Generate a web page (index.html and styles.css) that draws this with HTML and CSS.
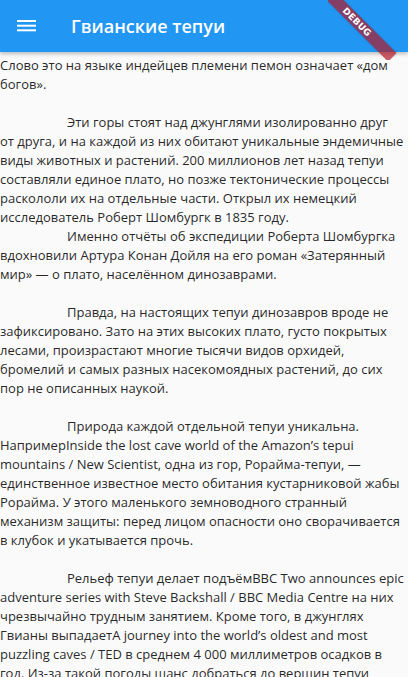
FILE: index.html
```html
<!DOCTYPE html>
<html lang="ru">
<head>
<meta charset="utf-8">
<title>Гвианские тепуи</title>
<link rel="stylesheet" href="styles.css">
</head>
<body>
<header class="appbar">
  <svg class="menu" width="20" height="12" viewBox="0 0 20 12" aria-hidden="true">
    <rect x="0" y="0" width="19" height="2" fill="#fff"/>
    <rect x="0" y="4.7" width="19" height="2" fill="#fff"/>
    <rect x="0" y="9.3" width="19" height="2" fill="#fff"/>
  </svg>
  <h1 class="title">Гвианские тепуи</h1>
</header>
<div class="banner-wrap"><div class="banner">DEBUG</div></div>
<main class="content">
  <p class="para">Слово это на языке индейцев племени пемон означает «дом<br>богов».</p>
  <p class="para indent gap">Эти горы стоят над джунглями изолированно друг<br>от друга, и на каждой из них обитают уникальные эндемичные<br>виды животных и растений. 200 миллионов лет назад тепуи<br>составляли единое плато, но позже тектонические процессы<br>раскололи их на отдельные части. Открыл их немецкий<br>исследователь Роберт Шомбургк в 1835 году.</p>
  <p class="para indent">Именно отчёты об экспедиции Роберта Шомбургка<br>вдохновили Артура Конан Дойля на его роман «Затерянный<br>мир» — о плато, населённом динозаврами.</p>
  <p class="para indent gap">Правда, на настоящих тепуи динозавров вроде не<br>зафиксировано. Зато на этих высоких плато, густо покрытых<br>лесами, произрастают многие тысячи видов орхидей,<br>бромелий и самых разных насекомоядных растений, до сих<br>пор не описанных наукой.</p>
  <p class="para indent gap">Природа каждой отдельной тепуи уникальна.<br>НапримерInside the lost cave world of the Amazon’s tepui<br>mountains / New Scientist, одна из гор, Рорайма-тепуи, —<br>единственное известное место обитания кустарниковой жабы<br>Рорайма. У этого маленького земноводного странный<br>механизм защиты: перед лицом опасности оно сворачивается<br>в клубок и укатывается прочь.</p>
  <p class="para indent gap">Рельеф тепуи делает подъёмBBC Two announces epic<br>adventure series with Steve Backshall / BBC Media Centre на них<br>чрезвычайно трудным занятием. Кроме того, в джунглях<br>Гвианы выпадаетA journey into the world’s oldest and most<br>puzzling caves / TED в среднем 4 000 миллиметров осадков в<br>год. Из-за такой погоды шанс добраться до вершин тепуи</p>
</main>
</body>
</html>
```
FILE: styles.css
```css
html, body {
  margin: 0;
  padding: 0;
}
body {
  width: 408px;
  height: 677px;
  overflow: hidden;
  background: #fafafa;
  font-family: "Open Sans", "Noto Sans", sans-serif;
  position: relative;
}
.appbar {
  position: relative;
  z-index: 2;
  height: 52px;
  background: #2196f3;
  display: flex;
  align-items: center;
  box-shadow: 0 2px 4px rgba(0, 0, 0, 0.25);
}
.menu {
  display: block;
  margin-left: 17px;
  margin-top: -1px;
}
.title {
  margin: 0 0 0 34px;
  color: #fff;
  font-size: 18px;
  font-weight: 600;
  line-height: 24px;
  margin-top: -1px;
}
.banner-wrap {
  position: absolute;
  top: 0;
  right: 0;
  width: 80px;
  height: 60px;
  overflow: hidden;
  z-index: 3;
}
.banner {
  position: absolute;
  left: -21.5px;
  top: 15.5px;
  width: 100px;
  height: 12px;
  transform: rotate(45deg);
  background: rgba(176, 24, 40, 0.7);
  color: #fff;
  font-family: "DejaVu Sans", sans-serif;
  font-weight: 700;
  font-size: 9px;
  line-height: 12px;
  text-align: center;
  letter-spacing: 0.2px;
  box-shadow: 0 0 2px rgba(0, 0, 0, 0.2);
}
.content {
  margin: 4px 0 0 0;
  color: rgba(0, 0, 0, 0.87);
  font-size: 13px;
  line-height: 19px;
}
.para {
  margin: 0;
  white-space: nowrap;
}
.indent {
  text-indent: 67px;
}
.gap {
  margin-top: 19px;
}
```
